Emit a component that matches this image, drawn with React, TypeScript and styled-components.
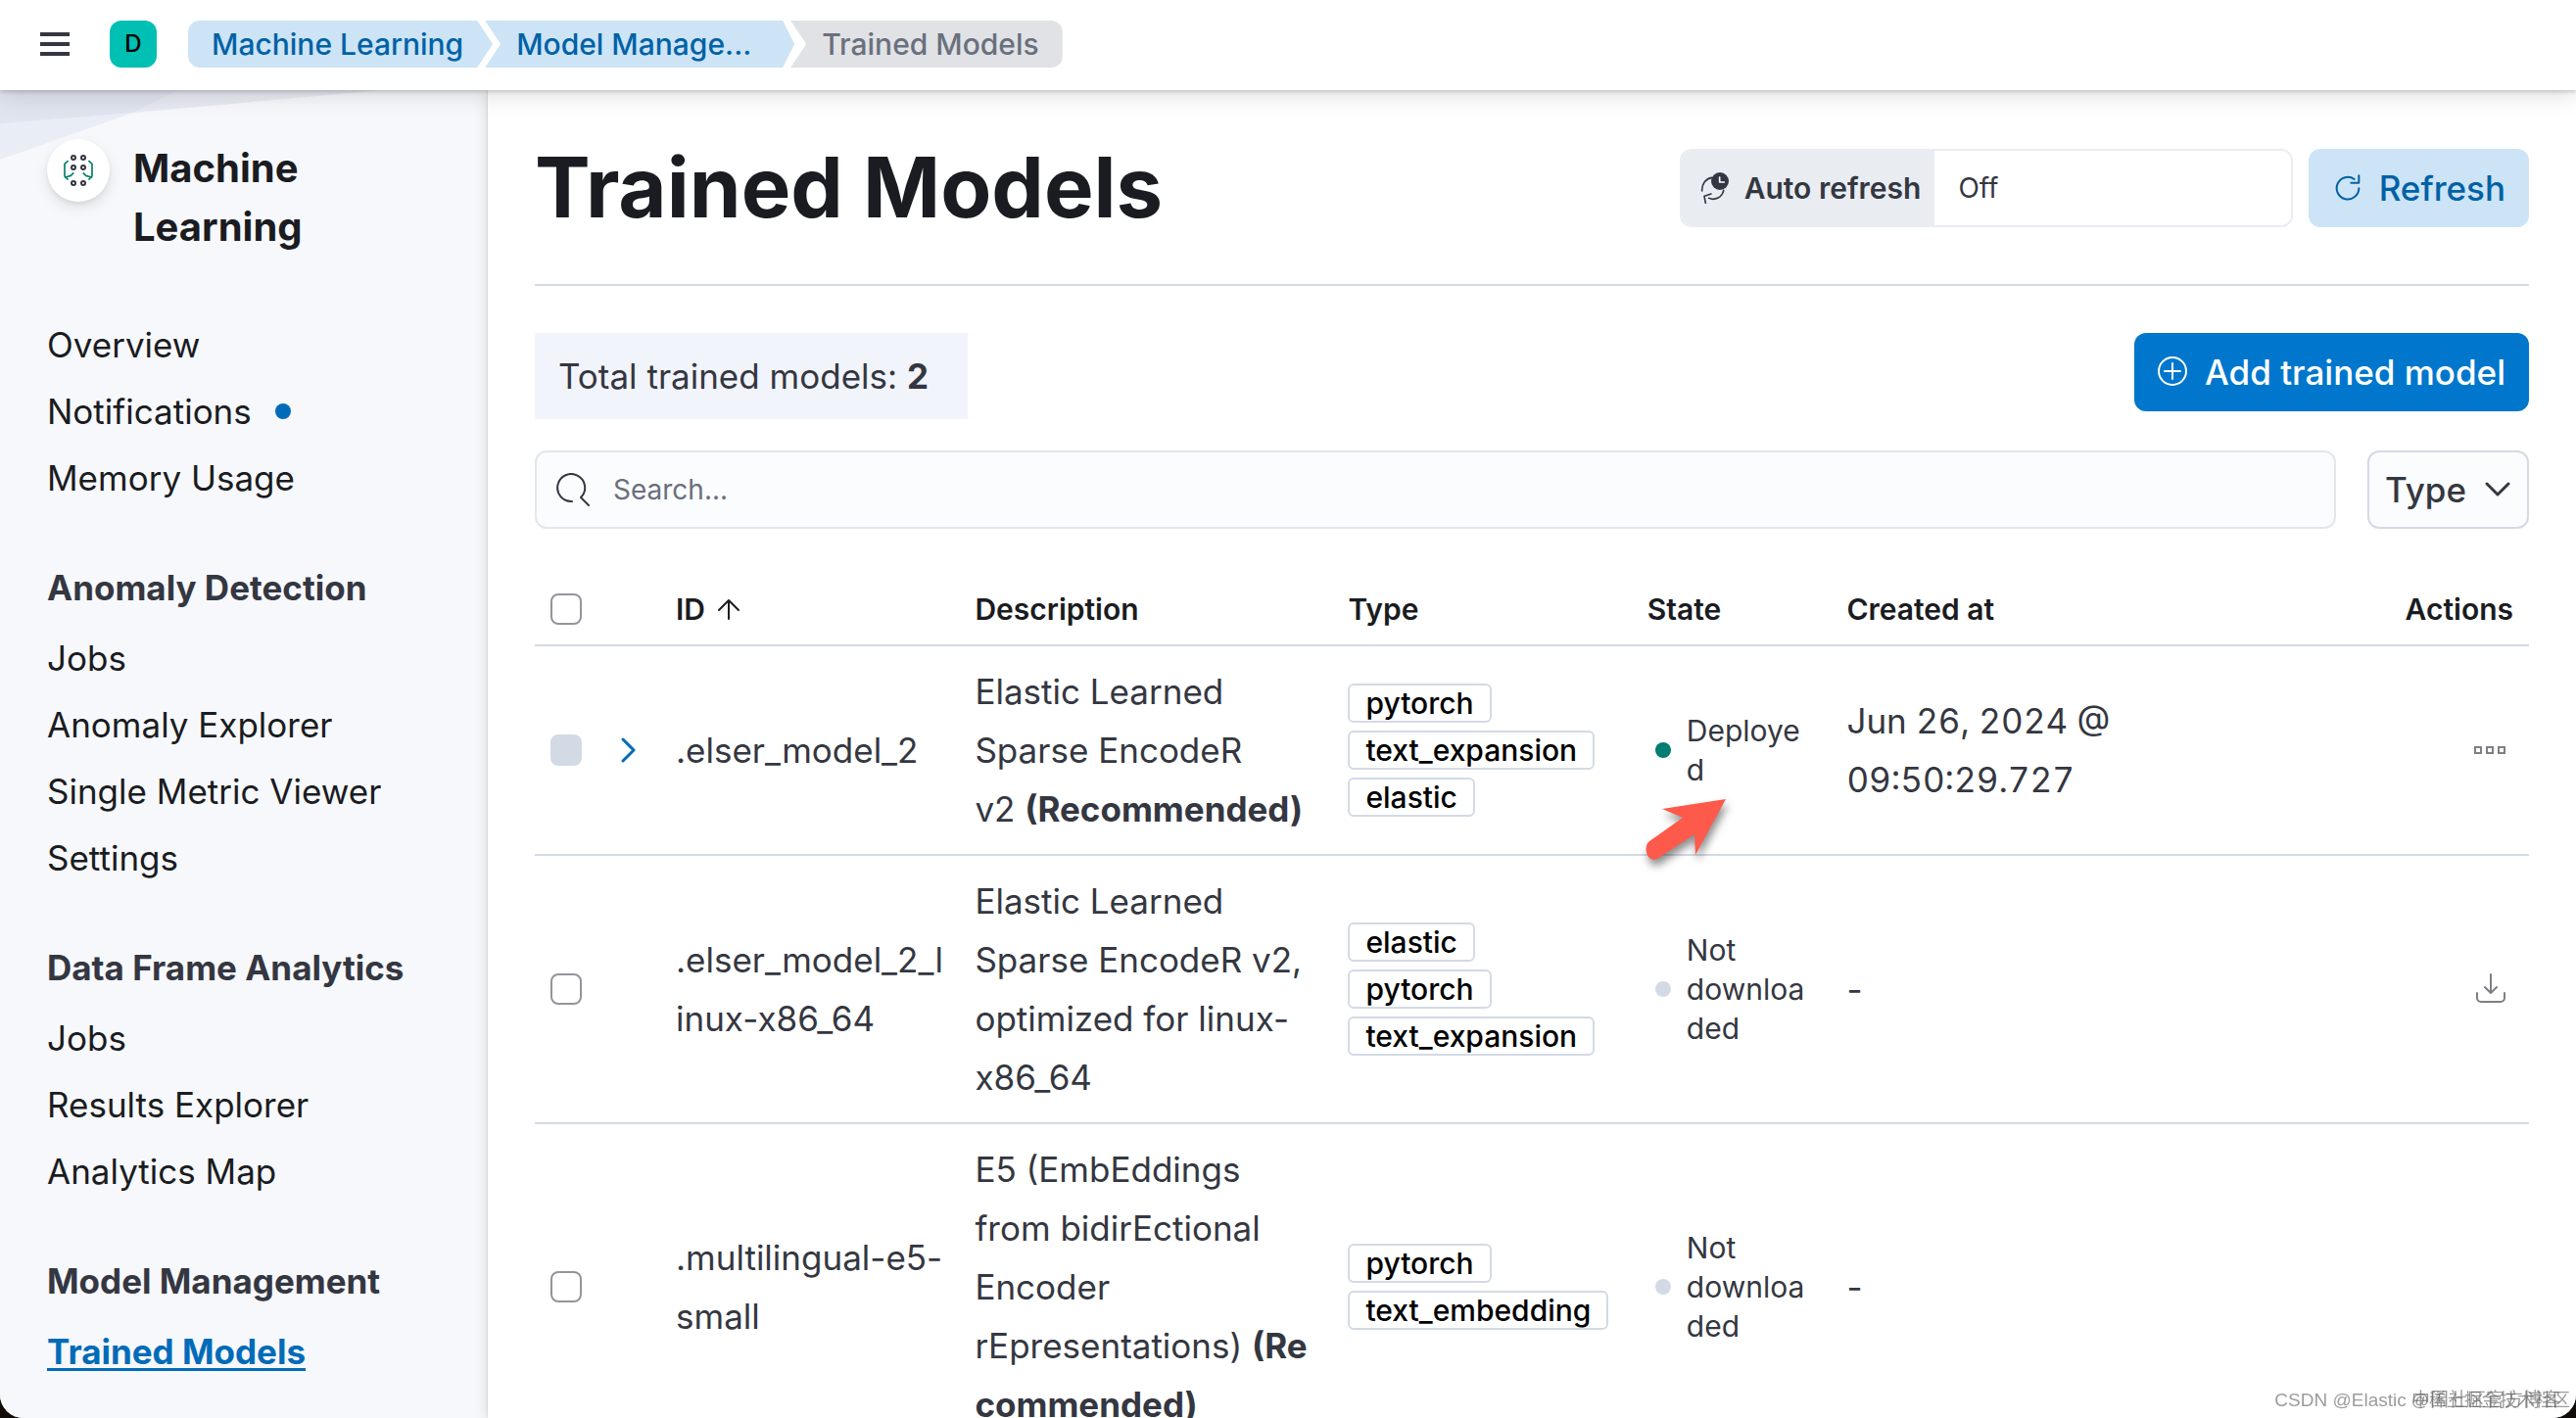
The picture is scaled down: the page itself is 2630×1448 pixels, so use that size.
import React from "react";
import styled, { createGlobalStyle, css } from "styled-components";

const color = {
  ink: "#343741",
  title: "#1a1c21",
  subdued: "#69707d",
  line: "#d3dae6",
  primary: "#0077cc",
  link: "#006bb8",
  linkDark: "#0061a6",
  primaryTint: "#cce4f5",
  success: "#017d73",
};

const GlobalStyle = createGlobalStyle`
  *, *::before, *::after { box-sizing: border-box; }
  body {
    margin: 0;
    background: #120c08;
    color: ${color.ink};
    font-family: Inter, "Liberation Sans", "Noto Sans CJK SC", sans-serif;
    font-size: 35px;
    line-height: 60px;
  }
  button, input { font-family: inherit; }
  ul, ol { list-style: none; margin: 0; padding: 0; }
  h1, h2, h3, p { margin: 0; }
`;

/* ---------- shell ---------- */

const Shell = styled.div`
  display: flex;
  flex-direction: column;
  height: 100vh;
  overflow: hidden;
  background: #fff;
  border-radius: 0 0 24px 24px;
`;

const TopBar = styled.header`
  position: relative;
  z-index: 2;
  display: flex;
  align-items: center;
  flex: none;
  height: 92px;
  padding: 0 32px 2px;
  background: #fff;
  box-shadow: 0 2px 4px rgba(0, 0, 0, 0.16), 0 4px 24px rgba(0, 0, 0, 0.14);
`;

const Body = styled.div`
  display: flex;
  flex: 1;
  min-height: 0;
`;

const MenuButton = styled.button`
  display: flex;
  padding: 8px;
  border: 0;
  background: none;
`;

const SpaceAvatar = styled.button`
  width: 48px;
  height: 48px;
  margin: 0 32px;
  padding: 0;
  border: 0;
  border-radius: 12px;
  background: #00bfb3;
  color: #000;
  font-size: 24px;
  font-weight: 500;
  line-height: 48px;
`;

const Crumbs = styled.ol`
  display: flex;
`;

type CrumbKind = "first" | "middle" | "last";

const crumbShape = {
  first: css`
    padding: 0 30px 0 24px;
    border-radius: 12px 0 0 12px;
    clip-path: polygon(0 0, calc(100% - 16px) 0, 100% 50%, calc(100% - 16px) 100%, 0 100%);
  `,
  middle: css`
    width: 316px;
    padding: 0 32px;
    clip-path: polygon(0 0, calc(100% - 12px) 0, 100% 50%, calc(100% - 12px) 100%, 0 100%, 16px 50%);
  `,
  last: css`
    padding: 0 24px 0 32px;
    border-radius: 0 12px 12px 0;
    clip-path: polygon(0 0, 100% 0, 100% 100%, 0 100%, 16px 50%);
  `,
};

const Crumb = styled.li<{ $kind: CrumbKind }>`
  height: 48px;
  margin-left: ${(p) => (p.$kind === "first" ? 0 : p.$kind === "middle" ? "-8px" : "-4px")};
  background: ${(p) => (p.$kind === "last" ? "#e1e2e5" : color.primaryTint)};
  color: ${(p) => (p.$kind === "last" ? color.subdued : color.linkDark)};
  font-size: 30px;
  font-weight: 500;
  line-height: 48px;
  white-space: nowrap;
  ${(p) => crumbShape[p.$kind]}
`;

const CrumbLink = styled.a`
  color: inherit;
  text-decoration: none;
`;

/* ---------- sidebar ---------- */

const Sidebar = styled.aside`
  position: relative;
  flex: none;
  width: 498px;
  padding: 50px 48px 0;
  background: #f7f8fc;
  overflow: hidden;
`;

const Backdrop = styled.svg`
  position: absolute;
  top: 0;
  left: 0;
`;

const SideHeading = styled.div`
  position: relative;
  display: flex;
  align-items: flex-start;
  gap: 24px;
  margin-bottom: 60px;
`;

const AppBadge = styled.span`
  display: flex;
  align-items: center;
  justify-content: center;
  width: 64px;
  height: 64px;
  border-radius: 50%;
  background: #fff;
  box-shadow: 0 2px 4px rgba(0, 0, 0, 0.06), 0 6px 14px rgba(0, 0, 0, 0.1);
`;

const SideTitle = styled.h2`
  flex: 1;
  max-width: 240px;
  color: ${color.title};
  font-size: 40px;
  font-weight: 700;
  line-height: 60px;
`;

const SideNav = styled.nav`
  display: flex;
  flex-direction: column;
  gap: 52px;
`;

const NavHeading = styled.h3`
  margin-bottom: 12px;
  font-size: 35px;
  font-weight: 700;
  line-height: 60px;
`;

const NavList = styled.ul`
  display: flex;
  flex-direction: column;
  gap: 8px;
`;

const NavItem = styled.li`
  display: flex;
  align-items: center;
  gap: 24px;
`;

const NavLink = styled.a<{ $active: boolean }>`
  color: ${(p) => (p.$active ? color.link : color.title)};
  font-weight: ${(p) => (p.$active ? 700 : 400)};
  text-decoration: ${(p) => (p.$active ? "underline" : "none")};
  text-decoration-thickness: 3px;
  text-underline-offset: 4px;
  white-space: nowrap;
`;

const UnreadDot = styled.span`
  width: 16px;
  height: 16px;
  border-radius: 50%;
  background: ${color.link};
`;

/* ---------- main ---------- */

const Main = styled.main`
  position: relative;
  z-index: 1;
  flex: 1;
  min-width: 0;
  padding: 50px 48px 0;
  background: #fff;
  box-shadow: 0 0 2px rgba(0, 0, 0, 0.18), 0 0 14px rgba(0, 0, 0, 0.14);
`;

const PageHeader = styled.div`
  display: flex;
  align-items: center;
  justify-content: space-between;
  padding-bottom: 48px;
  border-bottom: 2px solid ${color.line};
`;

const PageTitle = styled.h1`
  color: ${color.title};
  font-size: 85px;
  font-weight: 700;
  line-height: 100px;
`;

const HeaderControls = styled.div`
  display: flex;
  gap: 16px;
`;

const RefreshField = styled.div`
  display: flex;
  width: 626px;
  height: 80px;
  overflow: hidden;
  border: 2px solid #e9edf2;
  border-radius: 12px;
`;

const RefreshLabel = styled.label`
  display: flex;
  flex: none;
  align-items: center;
  gap: 14px;
  padding: 0 14px 0 18px;
  background: #e9edf2;
  font-size: 30px;
  font-weight: 600;
  white-space: nowrap;
`;

const RefreshInput = styled.input`
  flex: 1;
  min-width: 0;
  padding: 0 24px;
  border: 0;
  background: #fff;
  color: ${color.ink};
  font-size: 28px;
`;

const Button = styled.button<{ $fill?: boolean }>`
  display: flex;
  align-items: center;
  gap: 16px;
  height: 80px;
  padding: 0 24px;
  border: 0;
  border-radius: 12px;
  background: ${(p) => (p.$fill ? color.primary : color.primaryTint)};
  color: ${(p) => (p.$fill ? "#fff" : color.linkDark)};
  font-size: 35px;
  font-weight: 500;
  white-space: nowrap;
`;

const StatsRow = styled.div`
  display: flex;
  align-items: flex-start;
  justify-content: space-between;
  margin: 48px 0 32px;
`;

const Stats = styled.p`
  padding: 14px 40px 14px 24px;
  background: #f2f4fb;
`;

const FilterRow = styled.div`
  display: flex;
  gap: 32px;
  margin-bottom: 46px;
`;

const SearchBox = styled.label`
  display: flex;
  flex: 1;
  align-items: center;
  gap: 24px;
  height: 80px;
  padding: 0 20px;
  border: 2px solid #e3e7ec;
  border-radius: 12px;
  background: #fbfcfe;
`;

const SearchInput = styled.input`
  flex: 1;
  min-width: 0;
  padding: 0;
  border: 0;
  outline: 0;
  background: none;
  font-size: 28px;
  &::placeholder {
    color: ${color.subdued};
    opacity: 1;
  }
`;

const FilterButton = styled.button`
  display: flex;
  align-items: center;
  gap: 16px;
  height: 80px;
  padding: 0 14px 0 16px;
  border: 2px solid ${color.line};
  border-radius: 12px;
  background: #fbfcfe;
  color: ${color.ink};
  font-size: 35px;
  font-weight: 500;
`;

/* ---------- table ---------- */

const Table = styled.table`
  width: 100%;
  table-layout: fixed;
  border-collapse: separate;
  border-spacing: 0;
`;

const Col = styled.col<{ $width?: string }>`
  width: ${(p) => p.$width ?? "auto"};
`;

const HeadCell = styled.th<{ $align?: "right" }>`
  height: 74px;
  padding: 0 16px;
  border-bottom: 2px solid ${color.line};
  color: ${color.title};
  font-size: 30px;
  font-weight: 600;
  line-height: 40px;
  text-align: ${(p) => p.$align ?? "left"};
`;

const Cell = styled.td`
  position: relative;
  padding: 16px;
  border-bottom: 2px solid ${color.line};
  overflow-wrap: anywhere;
  vertical-align: middle;
`;

const Timestamp = styled.time`
  font-variant-numeric: tabular-nums;
`;

const SortButton = styled.button`
  display: flex;
  align-items: center;
  gap: 8px;
  padding: 0;
  border: 0;
  background: none;
  color: inherit;
  font-size: 30px;
  font-weight: 600;
  line-height: 40px;
`;

const Checkbox = styled.input`
  display: block;
  width: 32px;
  height: 32px;
  margin: 0;
  appearance: none;
  border: 2px solid #93959b;
  border-radius: 8px;
  background: #fff;
  &:disabled {
    border-color: ${color.line};
    background: ${color.line};
  }
`;

const IconButton = styled.button<{ $tone?: "primary" }>`
  display: flex;
  align-items: center;
  justify-content: center;
  width: ${(p) => (p.$tone ? 32 : 48)}px;
  height: 48px;
  margin-left: auto;
  margin-right: ${(p) => (p.$tone ? "auto" : 0)};
  padding: 0;
  border: 0;
  background: none;
  color: ${(p) => (p.$tone ? color.link : "#7d7f84")};
`;

const Badges = styled.div`
  display: flex;
  flex-direction: column;
  align-items: flex-start;
  gap: 8px;
`;

const Badge = styled.span`
  height: 40px;
  padding: 0 16px;
  border: 2px solid ${color.line};
  border-radius: 6px;
  color: #000;
  font-size: 30px;
  font-weight: 500;
  line-height: 36px;
  white-space: nowrap;
`;

const Health = styled.div`
  display: flex;
  align-items: center;
  gap: 16px;
  padding-left: 8px;
  font-size: 30px;
  line-height: 40px;
`;

const HealthDot = styled.span<{ $on: boolean }>`
  flex: none;
  width: 16px;
  height: 16px;
  border-radius: 50%;
  background: ${(p) => (p.$on ? color.success : color.line)};
`;

const Pointer = styled.svg`
  position: absolute;
  z-index: 1;
  top: 148px;
  left: 8px;
  filter: drop-shadow(2px 6px 4px rgba(0, 0, 0, 0.45));
`;

const Watermark = styled.div<{ $size: number; $right: number }>`
  position: fixed;
  z-index: 3;
  right: ${(p) => p.$right}px;
  bottom: 4px;
  color: rgba(90, 90, 90, 0.6);
  font-family: "Liberation Sans", "Noto Sans CJK SC", sans-serif;
  font-size: ${(p) => p.$size}px;
  line-height: 28px;
  white-space: nowrap;
`;

/* ---------- icons ---------- */

const stroke = {
  fill: "none",
  stroke: "currentColor",
  strokeLinecap: "round" as const,
  strokeLinejoin: "round" as const,
};

const MenuIcon = () => (
  <svg width="32" height="32" viewBox="0 0 32 32" fill={color.ink} aria-hidden="true">
    <path d="M1 4h30v4H1zM1 14h30v4H1zM1 24h30v4H1z" />
  </svg>
);

const MlIcon = () => (
  <svg width="32" height="36" viewBox="72 77 96 108" fill="none" strokeWidth="5" aria-hidden="true">
    <g stroke="#00806b" strokeLinecap="square" strokeLinejoin="round">
      <path d="M87 103l-9 8v38l9 9M80 152l17-5 7-7" />
      <path d="M153 103l9 8v38l-9 9M160 152l-17-5-7-7" />
    </g>
    <g stroke={color.ink} strokeWidth="6">
      <circle cx="105" cy="92" r="6" />
      <circle cx="135" cy="92" r="6" />
      <circle cx="105" cy="122" r="6" />
      <circle cx="135" cy="122" r="6" />
      <circle cx="105" cy="170" r="6" />
      <circle cx="135" cy="170" r="6" />
    </g>
  </svg>
);

const TimeRefreshIcon = () => (
  <svg width="32" height="32" viewBox="75 77 96 96" strokeWidth="5" {...stroke} aria-hidden="true">
    <path d="M83 134c-1-22 12-38 30-41M149 132c-4 22-26 32-45 24M94 171l-4-21 21-7" />
    <circle cx="138" cy="104" r="27" fill="currentColor" stroke="none" />
    <path d="M137 92v15h14" stroke="#fff" />
  </svg>
);

const RefreshIcon = () => (
  <svg width="32" height="32" viewBox="33 48 96 96" strokeWidth="6" {...stroke} aria-hidden="true">
    <path d="M101 69A34 34 0 1 0 115 97M115 58v22H91" />
  </svg>
);

const PlusCircleIcon = () => (
  <svg width="32" height="32" viewBox="0 0 32 32" strokeWidth="2" {...stroke} aria-hidden="true">
    <circle cx="15" cy="15" r="14" />
    <path d="M15 7v16M7 15h16" />
  </svg>
);

const SearchIcon = () => (
  <svg width="34" height="34" viewBox="0 0 34 34" strokeWidth="2" {...stroke} aria-hidden="true">
    <path d="M16 29A14 14 0 1 1 25 25L33 33" />
  </svg>
);

const ChevronDownIcon = () => (
  <svg width="32" height="32" viewBox="0 0 32 32" strokeWidth="3" {...stroke} aria-hidden="true">
    <path d="M5 10l11 11 11-11" />
  </svg>
);

const ChevronRightIcon = () => (
  <svg width="32" height="32" viewBox="0 0 32 32" strokeWidth="3" {...stroke} aria-hidden="true">
    <path d="M10 5l11 11-11 11" />
  </svg>
);

const SortUpIcon = () => (
  <svg width="32" height="32" viewBox="0 0 32 32" strokeWidth="2" {...stroke} aria-hidden="true">
    <path d="M16 26V7M6 17L16 7l10 10" />
  </svg>
);

const BoxesIcon = () => (
  <svg width="32" height="8" viewBox="0 0 32 8" strokeWidth="2" fill="none" stroke="currentColor" aria-hidden="true">
    <path d="M1 1h6v6H1zM13 1h6v6h-6zM25 1h6v6h-6z" />
  </svg>
);

const DownloadIcon = () => (
  <svg width="32" height="32" viewBox="0 0 32 32" strokeWidth="2" {...stroke} aria-hidden="true">
    <path d="M17 1v19M11 14l6 6 6-6M3 20v5a4 4 0 0 0 4 4h20a4 4 0 0 0 4-4v-5" />
  </svg>
);

const PointerArrow = () => (
  <Pointer width="96" height="88" viewBox="0 0 96 88" aria-hidden="true">
    <path d="M88 8L23 18L44 27L10 51C5 55 6 64 10 68C13 71 18 70 21 67L56 44L57 65Z" fill="#fd5a4b" />
  </Pointer>
);

/* ---------- data ---------- */

interface NavGroup {
  heading?: string;
  items: { label: string; unread?: boolean; active?: boolean }[];
}

const navGroups: NavGroup[] = [
  { items: [{ label: "Overview" }, { label: "Notifications", unread: true }, { label: "Memory Usage" }] },
  {
    heading: "Anomaly Detection",
    items: [{ label: "Jobs" }, { label: "Anomaly Explorer" }, { label: "Single Metric Viewer" }, { label: "Settings" }],
  },
  {
    heading: "Data Frame Analytics",
    items: [{ label: "Jobs" }, { label: "Results Explorer" }, { label: "Analytics Map" }],
  },
  { heading: "Model Management", items: [{ label: "Trained Models", active: true }] },
];

interface Model {
  id: string;
  description: string;
  recommended?: boolean;
  types: string[];
  deployed: boolean;
  createdAt?: string;
}

const models: Model[] = [
  {
    id: ".elser_model_2",
    description: "Elastic Learned Sparse EncodeR v2",
    recommended: true,
    types: ["pytorch", "text_expansion", "elastic"],
    deployed: true,
    createdAt: "Jun 26, 2024 @ 09:50:29.727",
  },
  {
    id: ".elser_model_2_linux-x86_64",
    description: "Elastic Learned Sparse EncodeR v2, optimized for linux-x86_64",
    types: ["elastic", "pytorch", "text_expansion"],
    deployed: false,
  },
  {
    id: ".multilingual-e5-small",
    description: "E5 (EmbEddings from bidirEctional Encoder rEpresentations)",
    recommended: true,
    types: ["pytorch", "text_embedding"],
    deployed: false,
  },
];

/* ---------- parts ---------- */

const SideNavigation = () => (
  <Sidebar>
    <Backdrop width="400" height="80" viewBox="0 0 400 80" aria-hidden="true">
      <path d="M0 0H182L136 23L0 71Z" fill="#e9edf6" />
      <path d="M0 0H390L136 23L0 34Z" fill="#d3dae6" fillOpacity="0.45" />
    </Backdrop>
    <SideHeading>
      <AppBadge>
        <MlIcon />
      </AppBadge>
      <SideTitle>Machine Learning</SideTitle>
    </SideHeading>
    <SideNav aria-label="Machine Learning">
      {navGroups.map((group) => (
        <div key={group.heading ?? "general"}>
          {group.heading && <NavHeading>{group.heading}</NavHeading>}
          <NavList>
            {group.items.map((item) => (
              <NavItem key={item.label}>
                <NavLink href="#" $active={Boolean(item.active)}>
                  {item.label}
                </NavLink>
                {item.unread && <UnreadDot />}
              </NavItem>
            ))}
          </NavList>
        </div>
      ))}
    </SideNav>
  </Sidebar>
);

const ModelRow = ({ model }: { model: Model }) => (
  <tr>
    <Cell>
      <Checkbox type="checkbox" disabled={model.deployed} aria-label={`Select ${model.id}`} />
    </Cell>
    <Cell>
      {model.deployed && (
        <IconButton $tone="primary" aria-label="Expand">
          <ChevronRightIcon />
        </IconButton>
      )}
    </Cell>
    <Cell>{model.id}</Cell>
    <Cell>
      {model.description}
      {model.recommended && (
        <>
          {"\u00a0"}
          <b>(Recommended)</b>
        </>
      )}
    </Cell>
    <Cell>
      <Badges>
        {model.types.map((type) => (
          <Badge key={type}>{type}</Badge>
        ))}
      </Badges>
    </Cell>
    <Cell>
      <Health>
        <HealthDot $on={model.deployed} />
        <span>{model.deployed ? "Deployed" : "Not downloaded"}</span>
      </Health>
      {model.deployed && <PointerArrow />}
    </Cell>
    <Cell>{model.createdAt ? <Timestamp>{model.createdAt}</Timestamp> : "-"}</Cell>
    <Cell>
      {model.deployed && (
        <IconButton aria-label="All actions">
          <BoxesIcon />
        </IconButton>
      )}
      {!model.deployed && model.types.includes("elastic") && (
        <IconButton aria-label="Download model">
          <DownloadIcon />
        </IconButton>
      )}
    </Cell>
  </tr>
);

const ModelTable = () => (
  <Table>
    <colgroup>
      <Col $width="64px" />
      <Col $width="64px" />
      <Col $width="15%" />
      <Col />
      <Col $width="15%" />
      <Col $width="10%" />
      <Col $width="15%" />
      <Col $width="20%" />
    </colgroup>
    <thead>
      <tr>
        <HeadCell>
          <Checkbox type="checkbox" aria-label="Select all rows" />
        </HeadCell>
        <HeadCell />
        <HeadCell aria-sort="ascending">
          <SortButton>
            ID
            <SortUpIcon />
          </SortButton>
        </HeadCell>
        <HeadCell>Description</HeadCell>
        <HeadCell>Type</HeadCell>
        <HeadCell>State</HeadCell>
        <HeadCell>Created at</HeadCell>
        <HeadCell $align="right">Actions</HeadCell>
      </tr>
    </thead>
    <tbody>
      {models.map((model) => (
        <ModelRow key={model.id} model={model} />
      ))}
    </tbody>
  </Table>
);

export default function App() {
  return (
    <>
      <GlobalStyle />
      <Shell>
        <TopBar>
          <MenuButton aria-label="Toggle primary navigation">
            <MenuIcon />
          </MenuButton>
          <SpaceAvatar>D</SpaceAvatar>
          <nav aria-label="Breadcrumbs">
            <Crumbs>
              <Crumb $kind="first">
                <CrumbLink href="#">Machine Learning</CrumbLink>
              </Crumb>
              <Crumb $kind="middle">
                <CrumbLink href="#">Model Manage...</CrumbLink>
              </Crumb>
              <Crumb $kind="last">Trained Models</Crumb>
            </Crumbs>
          </nav>
        </TopBar>
        <Body>
          <SideNavigation />
          <Main>
            <PageHeader>
              <PageTitle>Trained Models</PageTitle>
              <HeaderControls>
                <RefreshField>
                  <RefreshLabel htmlFor="auto-refresh">
                    <TimeRefreshIcon />
                    Auto refresh
                  </RefreshLabel>
                  <RefreshInput id="auto-refresh" readOnly value="Off" />
                </RefreshField>
                <Button>
                  <RefreshIcon />
                  Refresh
                </Button>
              </HeaderControls>
            </PageHeader>
            <StatsRow>
              <Stats>
                Total trained models: <b>2</b>
              </Stats>
              <Button $fill>
                <PlusCircleIcon />
                Add trained model
              </Button>
            </StatsRow>
            <FilterRow>
              <SearchBox>
                <SearchIcon />
                <SearchInput type="search" placeholder="Search..." aria-label="Search models" />
              </SearchBox>
              <FilterButton>
                Type
                <ChevronDownIcon />
              </FilterButton>
            </FilterRow>
            <ModelTable />
          </Main>
        </Body>
      </Shell>
      <Watermark $size={19} $right={16}>
        CSDN @Elastic 中国社区官方博客
      </Watermark>
      <Watermark $size={18} $right={6}>
        @稀土掘金技术社区
      </Watermark>
    </>
  );
}
